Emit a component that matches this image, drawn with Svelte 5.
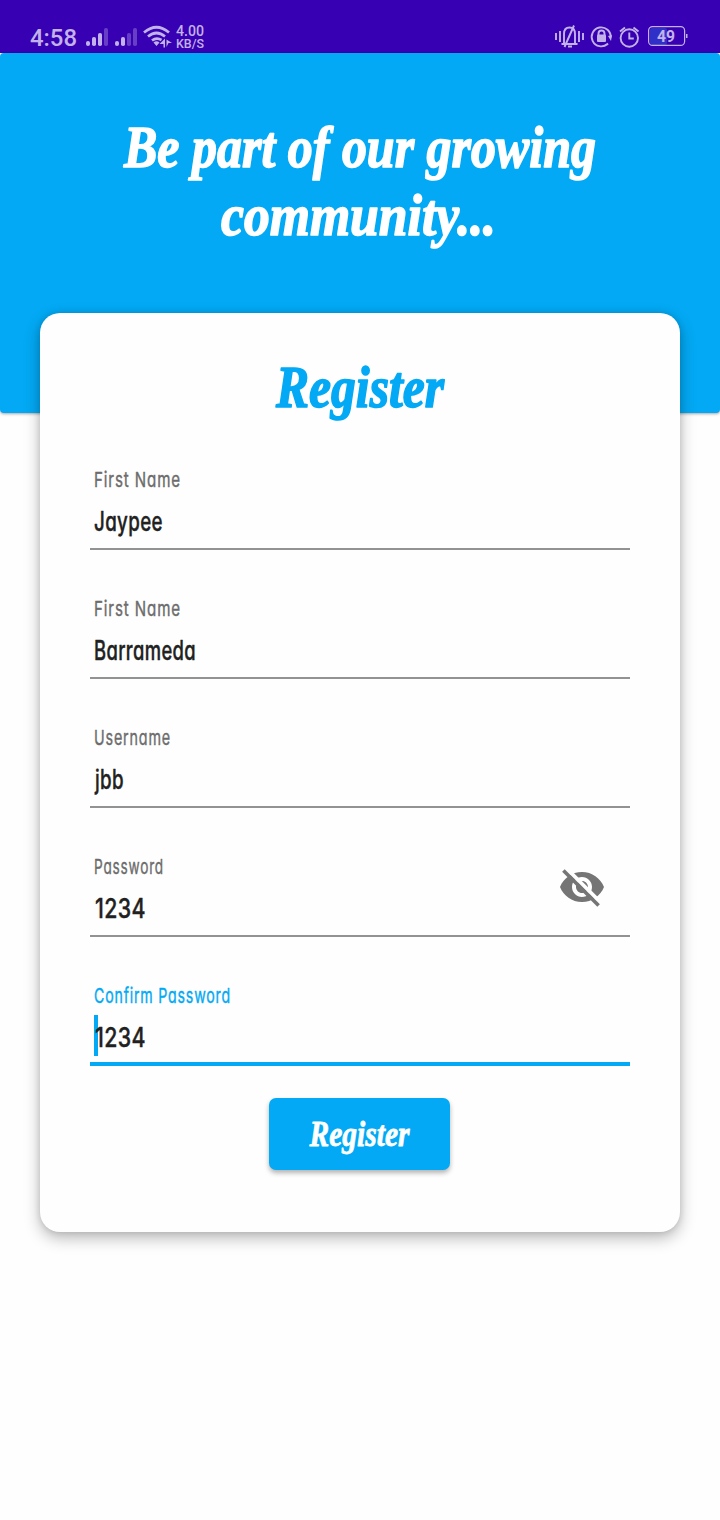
<script>
  const fields = [
    { label: 'First Name', lw: 87, value: 'Jaypee', vx: 4, vw: 69 },
    { label: 'First Name', lw: 87, value: 'Barrameda', vx: 4, vw: 102 },
    { label: 'Username', lw: 77, value: 'jbb', vx: 5, vw: 29 },
    { label: 'Password', lw: 70, value: '1234', vx: 5, vw: 51, eye: true },
    { label: 'Confirm Password', lw: 137, value: '1234', vx: 5, vw: 51, active: true }
  ];
</script>

<div class="screen">
  <div class="status">
    <svg width="720" height="53" viewBox="0 0 720 53" fill="#c3b2e9">
      <text x="30" y="46" font-size="24" font-weight="500" textLength="47" lengthAdjust="spacingAndGlyphs">4:58</text>
      <g>
        <rect x="86" y="41" width="4" height="5" rx="2" />
        <rect x="92" y="37" width="4" height="9" rx="1.8" />
        <rect x="98" y="33" width="4" height="13" rx="1.8" />
        <rect x="104" y="28" width="4" height="18" rx="1.8" opacity=".35" />
        <rect x="115" y="41" width="4" height="5" rx="2" />
        <rect x="121" y="37" width="4" height="9" rx="1.8" />
        <rect x="127" y="33" width="4" height="13" rx="1.8" opacity=".35" />
        <rect x="133" y="28" width="4" height="18" rx="1.8" opacity=".35" />
      </g>
      <g fill="none" stroke="#c3b2e9" stroke-width="2.7">
        <path d="M144 32.500Q156.500 22 169 32.500" />
        <path d="M148 36.500Q156.500 29.500 165 36.500" />
        <path d="M152 40.500Q156.500 37 161.500 40" />
      </g>
      <path d="M153.500 42.500Q156.500 40 159.500 42.500L156.500 46zM165 38.500v9h-1.500v-3.500h-4zM166.500 39.500l5.500 3.500h-3.500l-2 4z" />
      <text x="176" y="36" font-size="14" font-weight="500" textLength="28" lengthAdjust="spacingAndGlyphs">4.00</text>
      <text x="176" y="48" font-size="12" font-weight="500" textLength="28" lengthAdjust="spacingAndGlyphs">KB/S</text>
      <g fill="none" stroke="#c3b2e9" stroke-width="1.900">
        <path d="M556 33v7M560 31v11M579 31v11M583 33v7" />
        <path d="M561.500 44h16M564 43.500V34c0-4 2-6.500 5.500-6.500S575 30 575 34v9.500M574 25.500L564.500 47M568 46.500h4" />
        <path d="M607.500 44A9.500 9.500 0 1 1 610.700 37.500M608 43.500a9.500 9.500 0 0 1-2 1.500" />
        <circle cx="629.300" cy="38" r="8.700" />
        <path d="M629.300 32.500v6h4.500M620 31.500l5-4M638.500 31.500l-5-4" />
        <path d="M598.500 35v-1.500a3 3 0 0 1 6 0V35" />
      </g>
      <rect x="597" y="34.500" width="9" height="7.500" rx="1" />
      <path d="M608 36l4-1-1 6z" />
      <rect x="650" y="28" width="17" height="17" rx="2" fill="#3030c8" />
      <rect x="648.600" y="26.600" width="36" height="18.800" rx="4" fill="none" stroke="#c3b2e9" stroke-width="1.200" />
      <path d="M686 34h1.500v4H686z" />
      <text x="657" y="42" font-size="16" font-weight="700" textLength="18" lengthAdjust="spacingAndGlyphs">49</text>
    </svg>
  </div>

  <header>
    <svg width="720" height="360" viewBox="0 53 720 360" class="script" fill="#fff" stroke="#fff" stroke-width="1.600">
      <text x="124" y="167" font-size="59" textLength="472" lengthAdjust="spacingAndGlyphs">Be part of our growing</text>
      <text x="221" y="235" font-size="59" textLength="275" lengthAdjust="spacingAndGlyphs">community...</text>
    </svg>
  </header>

  <main>
    <svg class="script title" width="540" height="120" viewBox="90 313 540 120" fill="#03a9f4" stroke="#03a9f4" stroke-width="1.600">
      <text x="276" y="407" font-size="59" textLength="168" lengthAdjust="spacingAndGlyphs">Register</text>
    </svg>
    {#each fields as f}
      <div class="field" class:active={f.active}>
        <svg class="hand" width="540" height="89" viewBox="0 0 540 89">
          <text class="label" x="4" y="28" font-size="20.500" textLength={f.lw} lengthAdjust="spacingAndGlyphs">{f.label}</text>
          {#if f.active}<rect x="4" y="40" width="4" height="41" fill="#03a9f4" />{/if}
          <text class="value" x={f.vx} y="72" font-size="26.500" textLength={f.vw} lengthAdjust="spacingAndGlyphs">{f.value}</text>
          {#if f.eye}
            <g transform="translate(468 17) scale(2)">
              <path fill="#757575" d="M12 4.500C7 4.500 2.730 7.610 1 12c1.730 4.390 6 7.500 11 7.500s9.270-3.110 11-7.500c-1.730-4.390-6-7.500-11-7.500zM12 17c-2.760 0-5-2.240-5-5s2.240-5 5-5 5 2.240 5 5-2.240 5-5 5zm0-8c-1.660 0-3 1.340-3 3s1.340 3 3 3 3-1.340 3-3-1.340-3-3-3z" />
              <path d="M3.500 1.900L22 20.400" stroke="#fefefe" stroke-width="1.900" />
              <path d="M2.700 3.700L20.300 21.300" stroke="#757575" stroke-width="1.800" />
            </g>
          {/if}
        </svg>
      </div>
    {/each}
    <button>
      <svg class="script" width="181" height="72" viewBox="269 1098 181 72" fill="#fff" stroke="#fff" stroke-width=".8">
        <text x="309.500" y="1146" font-size="36" textLength="100" lengthAdjust="spacingAndGlyphs">Register</text>
      </svg>
    </button>
  </main>
</div>

<style>
  :global(body) { margin: 0; background: #fefefe; }
  .screen { width: 720px; height: 1520px; background: #fefefe; overflow: hidden; }
  svg { display: block; overflow: visible; }
  .status { height: 53px; background: #3700b3; font-family: Roboto, sans-serif; }
  header { height: 360px; background: #03a9f4; border-radius: 4px; box-shadow: 0 1px 3px rgba(0, 0, 0, .35); }
  .script { font-family: "Liberation Serif", serif; font-weight: 700; font-style: italic; stroke-linejoin: round; }
  main {
    position: relative;
    box-sizing: border-box;
    width: 640px;
    height: 919px;
    margin: -100px auto 0;
    padding: 0 50px;
    border-radius: 20px;
    background: #fefefe;
    box-shadow: 0 6px 16px rgba(0, 0, 0, .28), 0 0 6px rgba(0, 0, 0, .12);
    display: flex;
    flex-direction: column;
    align-items: center;
  }
  .title { margin-bottom: 26px; flex: none; }
  .field { box-sizing: border-box; width: 540px; height: 91px; margin-bottom: 38px; border-bottom: 2px solid #929292; flex: none; }
  .field.active { border-bottom: 4px solid #03a9f4; margin-bottom: 0; }
  .active svg { margin-bottom: -2px; }
  .hand { font-family: Inter, sans-serif; font-feature-settings: "cv11"; stroke-linejoin: round; }
  .label { fill: #6c6c6c; stroke: #6c6c6c; stroke-width: .4px; font-weight: 400; letter-spacing: 1.200px; }
  .value { fill: #212121; stroke: #212121; stroke-width: .4px; font-weight: 500; letter-spacing: .5px; }
  .active .label { fill: #03a9f4; stroke: #03a9f4; }
  button { align-self: flex-start; flex: none; width: 181px; height: 72px; margin: 32px 0 0 179px; padding: 0; border: 0; border-radius: 7px; background: #03a9f4; box-shadow: 0 3px 5px rgba(0, 0, 0, .3); }
</style>
